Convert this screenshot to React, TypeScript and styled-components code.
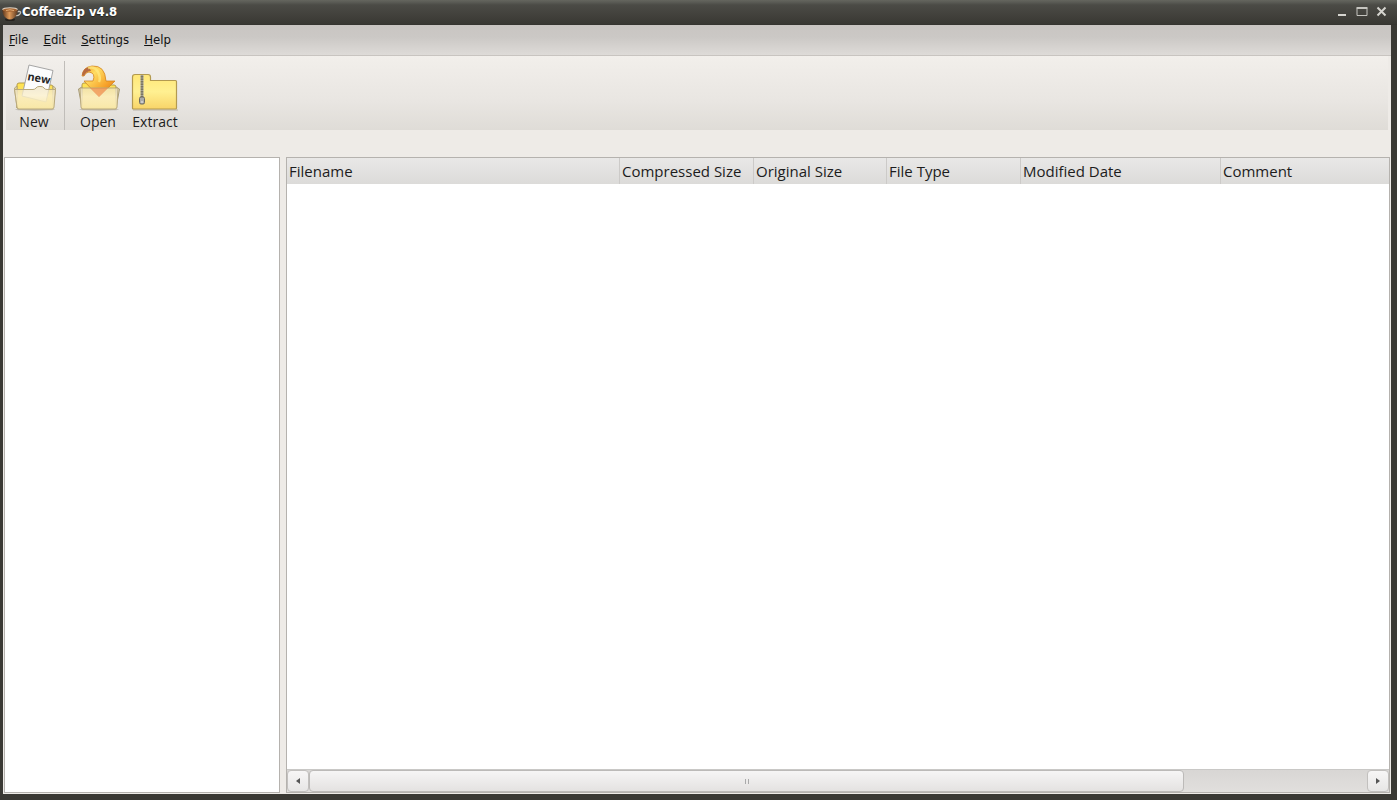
import React from 'react';
import styled, { createGlobalStyle } from 'styled-components';

const GlobalStyle = createGlobalStyle`
  *, *::before, *::after { box-sizing: border-box; }
  body { margin: 0; font-family: 'Open Sans', 'Noto Sans', sans-serif; color: #1c1c1c; }
  button { font: inherit; color: inherit; border: 0; padding: 0; background: none; cursor: default; }
`;

const Window = styled.div`
  display: flex;
  flex-direction: column;
  min-height: 100vh;
  padding: 0 6px 6px 3px;
  background: #3a3934;
`;

const TitleBar = styled.header`
  display: flex;
  align-items: center;
  height: 25px;
  margin: 0 -6px 0 -3px;
  padding: 0 7px 2px 2px;
  background: linear-gradient(#65665f 0, #5b5c56 2px, #4b4b46 5px, #43423d 14px, #393833 24px, #33322e 25px);
`;

const Title = styled.h1`
  flex: 1;
  margin: 0;
  font: bold 13px/24px 'DejaVu Sans Condensed', 'DejaVu Sans', sans-serif;
  color: #fff;
  text-shadow: 0 1px 1px #222;
`;

const Controls = styled.div`
  display: flex;
  gap: 4px;
`;

const ControlButton = styled.button`
  width: 16px;
  height: 16px;
  svg { display: block; }
`;

const Body = styled.main`
  display: flex;
  flex: 1;
  flex-direction: column;
  padding-bottom: 1px;
  background: #eeebe7;
`;

const MenuBar = styled.nav`
  display: flex;
  gap: 15px;
  height: 31px;
  padding: 0 6px;
  border-bottom: 1px solid #c8c4c0;
  background: linear-gradient(#c9c5c2, #cbc8c5 40%, #dedbd8);
`;

const MenuItem = styled.button`
  font: 13px/30px 'DejaVu Sans Condensed', 'DejaVu Sans', sans-serif;
  color: #111;
`;

const Mnemonic = styled.span`
  text-decoration: underline;
`;

const ToolBar = styled.div`
  display: flex;
  height: 74px;
  margin: 0 3px;
  padding-top: 5px;
  background: linear-gradient(#f2efeb, #e9e6e2 60%, #dfdcd7);
`;

const ToolGroup = styled.div`
  display: flex;
  gap: 7px;
  padding: 0 5px 0 3px;
  & + & { padding-left: 8px; border-left: 1px solid #c0bdb9; }
`;

const ToolButton = styled.button`
  display: flex;
  flex-direction: column;
  align-items: center;
  width: 50px;
  font-size: 14px;
  line-height: 22px;
  svg { display: block; flex: none; }
`;

const Panels = styled.div`
  display: flex;
  flex: 1;
  gap: 6px;
  margin-top: 27px;
  padding: 0 1px;
`;

const Tree = styled.aside`
  flex: 0 0 276px;
  border: 1px solid #b5b2ae;
  background: #fff;
`;

const FileList = styled.section`
  display: flex;
  flex: 1;
  flex-direction: column;
  min-width: 0;
  border: 1px solid #b5b2ae;
  background: #fff;
`;

const FileTable = styled.table`
  width: 100%;
  table-layout: fixed;
  border-collapse: separate;
  border-spacing: 0;
`;

const HeadRow = styled.tr`
  background: linear-gradient(#e9e8e7, #dcdbd9);
`;

const HeadCell = styled.th<{ $width?: number }>`
  width: ${p => (p.$width ? `${p.$width}px` : 'auto')};
  height: 26px;
  padding: 0 0 0 2px;
  border-right: 1px solid #cccac8;
  font-size: 15px;
  font-weight: 400;
  line-height: 26px;
  text-align: left;
  white-space: nowrap;
  &:last-child { border-right: 0; }
`;

const ScrollBar = styled.div`
  display: flex;
  height: 23px;
  margin-top: auto;
  border-top: 1px solid #c9c8c6;
  background: linear-gradient(#d8d6d4, #e1dfdd);
`;

const ScrollButton = styled.button`
  display: flex;
  align-items: center;
  justify-content: center;
  width: 22px;
  border: 1px solid #c2c0be;
  border-radius: 4px;
  background: linear-gradient(#f7f6f6, #e7e6e5);
`;

const Track = styled.div`
  flex: 1;
  display: flex;
`;

const Thumb = styled.button`
  display: flex;
  align-items: center;
  justify-content: center;
  gap: 2px;
  width: calc(83% - 3px);
  border: 1px solid #bcbab8;
  border-radius: 4px;
  background: linear-gradient(#f6f5f5, #e4e2e1);
`;

const Grip = styled.span`
  width: 1px;
  height: 5px;
  background: #aaa;
`;

const CupIcon = () => (
  <svg width="20" height="20" viewBox="0 0 20 20" aria-hidden="true">
    <defs>
      <linearGradient id="cup" x2="1">
        <stop offset="0" stopColor="#59331a" />
        <stop offset=".45" stopColor="#e09a58" />
        <stop offset="1" stopColor="#54341f" />
      </linearGradient>
    </defs>
    <ellipse cx="8" cy="17.500" rx="5" ry="1.500" fill="#25211d" />
    <path d="M14 9.500h4q1.500 1-.5 3-1.500 1.500-4 1" fill="none" stroke="#c5c1b8" strokeWidth="1.300" />
    <path d="M.3 8Q.5 13 4 16q4 3 8 0 3.500-3 4-8z" fill="url(#cup)" />
    <ellipse cx="8" cy="7.200" rx="7.800" ry="2" fill="#ddd2c4" />
    <ellipse cx="8" cy="8" rx="7" ry="1.700" fill="#a5632f" />
    <path d="M4 8.500q4-1.500 8 0" stroke="#e1ad77" fill="none" />
  </svg>
);

const FolderDefs = () => (
  <defs>
    <linearGradient id="pocket" x2="0" y2="1">
      <stop offset="0" stopColor="#eee3c4" stopOpacity=".7" />
      <stop offset=".4" stopColor="#fbf0cc" stopOpacity=".8" />
      <stop offset="1" stopColor="#f8e7a4" />
    </linearGradient>
    <linearGradient id="back" x2="0" y2="1">
      <stop offset="0" stopColor="#ffe350" />
      <stop offset="1" stopColor="#f4dc80" />
    </linearGradient>
    <linearGradient id="arrow" x2="1" y2="1">
      <stop offset="0" stopColor="#f59a20" />
      <stop offset=".3" stopColor="#ffdc62" />
      <stop offset=".65" stopColor="#f7a52c" />
      <stop offset="1" stopColor="#df6410" />
    </linearGradient>
    <linearGradient id="zipfolder" x2="0" y2="1">
      <stop offset="0" stopColor="#ffe778" />
      <stop offset=".5" stopColor="#fff091" />
      <stop offset="1" stopColor="#f8d468" />
    </linearGradient>
  </defs>
);

const NewIcon = () => (
  <svg width="50" height="50" viewBox="0 0 50 50" aria-hidden="true">
    <FolderDefs />
    <ellipse cx="26" cy="48.500" rx="20" ry="1.200" fill="#bdb8ae" />
    <path d="M8 47V24q0-2 2-2h8q2 0 2 2h22q2 0 2 2v21z" fill="url(#back)" stroke="#b59d4b" />
    <path d="M20 4L44 9.500L37 41L13 35z" fill="#fcfcfc" stroke="#9c9c9c" strokeWidth=".9" />
    <text x="18" y="19" transform="rotate(10 18 19)" fontFamily="Open Sans, sans-serif" fontSize="11" fontWeight="700" fill="#272727">new</text>
    <path d="M5.500 27L8 25v22zM46.500 27L44 25v22z" stroke="#b4a67b" fill="#e7dbb0" />
    <path d="M5.500 28.500H24q2 0 3-1.500t3-1.500h2q2 0 3 1.500t3 1.500H46.500L45 46q0 2-2 2H10q-2 0-2-2z" fill="url(#pocket)" stroke="#b9a97c" />
  </svg>
);

const OpenIcon = () => (
  <svg width="50" height="50" viewBox="0 0 50 50" aria-hidden="true">
    <ellipse cx="26" cy="48.500" rx="20" ry="1.200" fill="#bdb8ae" />
    <path d="M9 47V24q0-2 2-2h8q2 0 2 2h20q2 0 2 2v21z" fill="url(#back)" stroke="#b59d4b" />
    <path d="M5.500 28l3.500-2v21zM46.500 28l-3.500-2v21z" fill="#e3d9bb" stroke="#a69a77" />
    <path d="M9 15Q10 6 19 5q13-1 14 15h9L26 36 11 20h9q3-8-4-9-3 0-5 4z" fill="url(#arrow)" stroke="#d38523" strokeWidth=".8" />
    <path d="M9 14q1-7 7-8l2 4q-5 0-7 5z" fill="#b86a40" />
    <path d="M15 7q7-2 10 4t1 10" fill="none" stroke="#ffeb83" strokeWidth="2.500" opacity=".7" />
    <path d="M7 27H45L44 46q0 2-2 2H10q-2 0-2-2z" fill="url(#pocket)" stroke="#b9a97c" />
    <path d="M17 27h18l-9 9z" fill="#ef762e" opacity=".5" />
  </svg>
);

const ExtractIcon = () => (
  <svg width="50" height="50" viewBox="0 0 50 50" aria-hidden="true">
    <path d="M3 49h45" stroke="#b8b2a7" />
    <path d="M2.500 47V16q0-2.500 2.500-2.500h13q2.500 0 2.500 2.500v3.500H45.500q1 0 1 1V47q0 1-1 1h-42q-1 0-1-1z" fill="url(#zipfolder)" stroke="#b39a50" strokeWidth="1.200" />
    <path d="M12 14v27" stroke="#8b8672" strokeWidth="3" />
    <path d="M12 14v26" stroke="#dedbca" strokeWidth="3" strokeDasharray="1 1.500" />
    <path d="M12 14v26" stroke="#68655b" />
    <rect x="9.500" y="36" width="5" height="7" rx="1.500" fill="#aaa" stroke="#6a685f" />
    <path d="M11 41h2" stroke="#eee" />
  </svg>
);

const menus = ['File', 'Edit', 'Settings', 'Help'];

const columns: { label: string; width?: number }[] = [
  { label: 'Filename', width: 333 },
  { label: 'Compressed Size', width: 134 },
  { label: 'Original Size', width: 133 },
  { label: 'File Type', width: 134 },
  { label: 'Modified Date', width: 200 },
  { label: 'Comment' },
];

export default function App() {
  return (
    <Window>
      <GlobalStyle />
      <TitleBar>
        <CupIcon />
        <Title>CoffeeZip v4.8</Title>
        <Controls>
          <ControlButton aria-label="Minimize">
            <svg width="16" height="16"><path d="M4 11h8" stroke="#d5d4cf" strokeWidth="2" /></svg>
          </ControlButton>
          <ControlButton aria-label="Maximize">
            <svg width="16" height="16"><path d="M3 4.500h10v7H3z" fill="none" stroke="#c6c5c0" /><path d="M2.500 4h11" stroke="#c6c5c0" strokeWidth="2" /></svg>
          </ControlButton>
          <ControlButton aria-label="Close">
            <svg width="16" height="16"><path d="M3.500 3.500l8 8m0-8l-8 8" stroke="#d5d4cf" strokeWidth="2" /></svg>
          </ControlButton>
        </Controls>
      </TitleBar>
      <Body>
        <MenuBar>
          {menus.map(m => (
            <MenuItem key={m}><Mnemonic>{m[0]}</Mnemonic>{m.slice(1)}</MenuItem>
          ))}
        </MenuBar>
        <ToolBar>
          <ToolGroup>
            <ToolButton><NewIcon />New</ToolButton>
          </ToolGroup>
          <ToolGroup>
            <ToolButton><OpenIcon />Open</ToolButton>
            <ToolButton><ExtractIcon />Extract</ToolButton>
          </ToolGroup>
        </ToolBar>
        <Panels>
          <Tree aria-label="Folders" />
          <FileList>
            <FileTable>
              <thead>
                <HeadRow>
                  {columns.map(c => (
                    <HeadCell key={c.label} $width={c.width}>{c.label}</HeadCell>
                  ))}
                </HeadRow>
              </thead>
            </FileTable>
            <ScrollBar>
              <ScrollButton aria-label="Scroll left">
                <svg width="6" height="6"><path d="M5 0v6L1 3z" fill="#555" /></svg>
              </ScrollButton>
              <Track>
                <Thumb aria-label="Scroll position"><Grip /><Grip /></Thumb>
              </Track>
              <ScrollButton aria-label="Scroll right">
                <svg width="6" height="6"><path d="M1 0v6l4-3z" fill="#555" /></svg>
              </ScrollButton>
            </ScrollBar>
          </FileList>
        </Panels>
      </Body>
    </Window>
  );
}
